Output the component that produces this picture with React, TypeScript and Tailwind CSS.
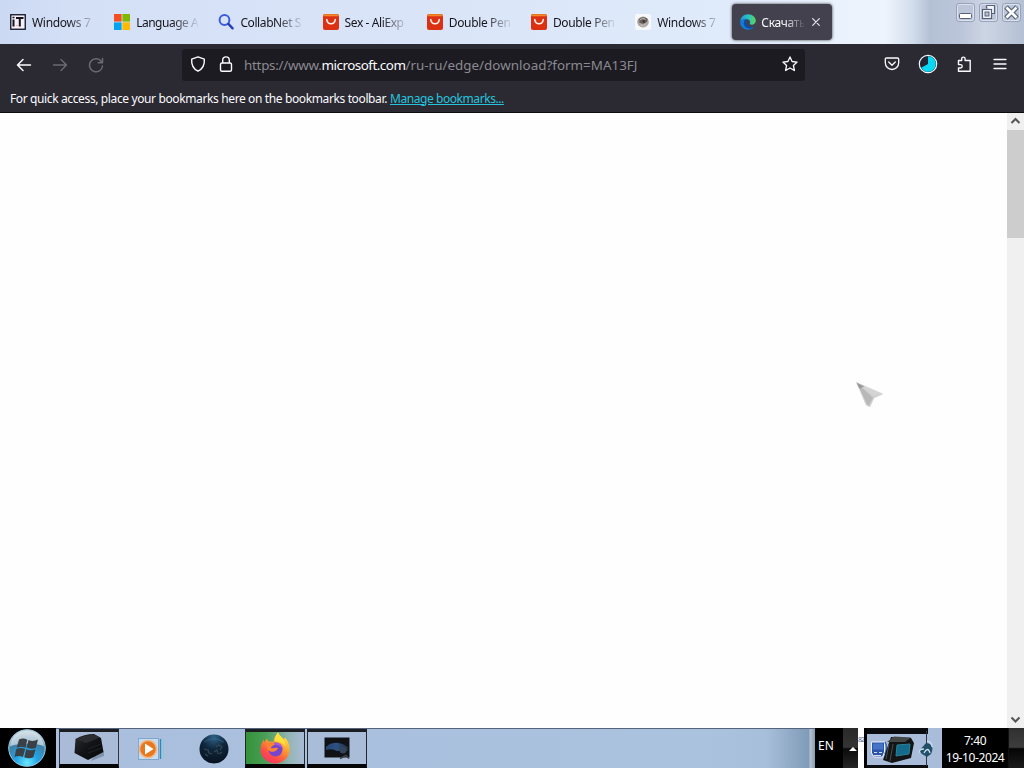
import React from 'react';

type Tab = { title: string; icon: React.ReactNode; tracking: string };

// ── Favicons ─────────────────────────────────────────────────────────────────
const ItIcon = () => (
  <svg viewBox="0 0 16 16" className="w-4 h-4 shrink-0">
    <rect x="0.75" y="0.75" width="14.5" height="14.5" fill="#f4f0f8" stroke="#111122" strokeWidth="1.3" />
    <path d="M3.5 5.5v7M3.5 2.8v1.5M6 4h7.5M9.8 4v8.5" stroke="#17131c" strokeWidth="2" fill="none" />
    <path d="M6 11.5h2" stroke="#efb4b4" />
  </svg>
);

const MicrosoftIcon = () => (
  <svg viewBox="0 0 16 16" className="w-4 h-4 shrink-0">
    <path d="M0 0h7.6v7.6H0z" fill="#f25022" />
    <path d="M8.4 0H16v7.6H8.4z" fill="#7fba00" />
    <path d="M0 8.4h7.6V16H0z" fill="#00a4ef" />
    <path d="M8.4 8.4H16V16H8.4z" fill="#ffb900" />
  </svg>
);

const SearchIcon = () => (
  <svg viewBox="0 0 16 16" className="w-4 h-4 shrink-0" fill="none" strokeLinecap="round">
    <circle cx="6.5" cy="6" r="4.9" stroke="#3a5be0" strokeWidth="2" />
    <path d="M10.4 9.9l4.2 4.4" stroke="#2b3fb4" strokeWidth="2.4" />
  </svg>
);

const AliIcon = () => (
  <svg viewBox="0 0 16 16" className="w-4 h-4 shrink-0">
    <rect width="16" height="16" rx="2" fill="#dc3013" />
    <path d="M.2 2Q.2.2 2 .2h12q1.8 0 1.8 1.8v.2H.2z" fill="#ee8a2a" />
    <path d="M3.7 5.4c.7 5.7 7.900 5.700 8.600 0" stroke="#fff0ec" strokeWidth="1.5" fill="none" strokeLinecap="round" />
  </svg>
);

const GearIcon = () => (
  <svg viewBox="0 0 16 16" className="w-4 h-4 shrink-0">
    <rect width="16" height="16" rx="2" fill="#f7f8fa" />
    <ellipse cx="8" cy="8" rx="5.8" ry="5.4" fill="#aca6a2" />
    <path d="M3.5 6c2-3.500 7-3.500 9.300-.5-1 4-5 5.500-8.500 3z" fill="#6b605c" />
    <path d="M4.5 6.500c1.500-2 4-2.500 6-1M5.500 11c2 1 4.500.5 5.500-1.500" stroke="#c8c2bd" fill="none" />
    <circle cx="8.8" cy="7.5" r="1.4" fill="#433a38" />
  </svg>
);

const EdgeIcon = () => (
  <svg viewBox="0 0 16 16" className="w-4 h-4 shrink-0">
    <defs>
      <linearGradient id="edgeTop" x1="0" x2="1">
        <stop offset="0" stopColor="#1b9de0" />
        <stop offset=".55" stopColor="#2bc4bd" />
        <stop offset="1" stopColor="#5fd657" />
      </linearGradient>
    </defs>
    <path d="M.2 7.500C.6 3 4 .2 8 .2c4.600 0 7.800 3.200 7.800 6.600 0 2.400-1.800 3.900-4 3.900-1.800 0-2.500-.7-1.900-1.600.8-1.500-.5-3.800-3-3.800C4 5.300.9 6.300.2 7.500z" fill="url(#edgeTop)" />
    <path d="M.2 7.500C1.500 5 4 4.300 6.300 5.200 4.300 6.200 4 9 5.500 11c1.800 2.500 5 3 8.700 1.800-2 2.500-5 3.400-7.500 2.900C2.800 15-.2 11.600.2 7.500z" fill="#147bd6" />
    <path d="M6.300 5.200c-3 1-3.700 5.300-.3 8.300 2.300 2 5.800 1 8.200-.7-4.600 1.400-8.700-2.200-7.900-7.600z" fill="#0c4ea2" />
  </svg>
);

const tabs: Tab[] = [
  { title: 'Windows 7', icon: <ItIcon />, tracking: 'tracking-[-0.3px]' },
  { title: 'Language A', icon: <MicrosoftIcon />, tracking: 'tracking-[-0.5px]' },
  { title: 'CollabNet S', icon: <SearchIcon />, tracking: 'tracking-[-0.4px]' },
  { title: 'Sex - AliExp', icon: <AliIcon />, tracking: 'tracking-[-0.4px]' },
  { title: 'Double Pen', icon: <AliIcon />, tracking: 'tracking-[-0.35px]' },
  { title: 'Double Pen', icon: <AliIcon />, tracking: 'tracking-[-0.35px]' },
  { title: 'Windows 7', icon: <GearIcon />, tracking: 'tracking-[-0.3px]' },
];

// ── Window buttons ───────────────────────────────────────────────────────────
const WindowButtons = () => (
  <div className="flex gap-1 pt-[3px] pr-[3px]">
    <svg viewBox="0 0 19 19" className="w-[19px] h-[19px]">
      <rect x="0.5" y="0.5" width="18" height="18" rx="2.5" fill="#bcc6d8" stroke="#98a2b8" />
      <rect x="1.5" y="1.5" width="16" height="16" rx="2" fill="none" stroke="#dce3ef" />
      <rect x="3.5" y="10.5" width="12" height="5" rx="1" fill="#fff" stroke="#56617a" />
    </svg>
    <svg viewBox="0 0 19 19" className="w-[19px] h-[19px]">
      <rect x="0.5" y="0.5" width="18" height="18" rx="2.5" fill="#bcc6d8" stroke="#98a2b8" />
      <rect x="1.5" y="1.5" width="16" height="16" rx="2" fill="none" stroke="#dce3ef" />
      <path d="M7.5 2.5h8v8h-3M7.5 2.5v3" fill="#f5f7fb" stroke="#56617a" strokeWidth="1.2" />
      <rect x="3.5" y="6.5" width="9" height="9" fill="#fff" stroke="#56617a" strokeWidth="1.2" />
      <rect x="6" y="9" width="4" height="4" fill="#b9c2d3" stroke="#56617a" />
    </svg>
    <svg viewBox="0 0 19 19" className="w-[19px] h-[19px]">
      <rect x="0.5" y="0.5" width="18" height="18" rx="2.5" fill="#bcc6d8" stroke="#98a2b8" />
      <rect x="1.5" y="1.5" width="16" height="16" rx="2" fill="none" stroke="#dce3ef" />
      <path d="M4 4l11 11M15 4L4 15" stroke="#56617a" strokeWidth="5" />
      <path d="M4.5 4.5l10 10M14.5 4.5l-10 10" stroke="#fff" strokeWidth="2.6" />
    </svg>
  </div>
);

const TabStrip = () => (
  <div className="h-11 flex justify-between bg-[linear-gradient(90deg,#cbd9f3_0px,#d4e0f6_80px,#d9e4f8_400px,#dfeafa_720px,#eaf2fd_840px,#edf4fd_885px,#d3deec_912px,#b4c1d5_930px,#bbc5d9_960px,#ccd5e4_985px,#b4c0d3_1024px)]">
    <div className="flex">
      {tabs.map((tab, i) => (
        <div key={i} className="w-[104.2px] pl-[10px] pr-2 flex items-center gap-[6px]">
          {tab.icon}
          <span className={`flex-1 pt-0.5 whitespace-nowrap text-[12px] text-[#15141a] ${tab.tracking} [mask-image:linear-gradient(90deg,#000_36px,transparent_64px)]`}>
            {tab.title}
          </span>
        </div>
      ))}
      <div className="ml-[3px] mt-1 w-[100px] h-9 rounded-[4px] bg-[#42414d] shadow-[0_0_3px_#333] flex items-center pl-2">
        <EdgeIcon />
        <span className="ml-[5px] w-[44px] pt-0.5 whitespace-nowrap text-[12px] tracking-[-0.35px] text-[#fbfbfe] [mask-image:linear-gradient(90deg,#000_24px,transparent_44px)]">
          Скачать
        </span>
        <svg viewBox="0 0 8 8" className="w-2 h-2 ml-[7px]" stroke="#e6e6ea" strokeWidth="1.2" strokeLinecap="round">
          <path d="M.7.7l6.600 6.600M7.300.7L.7 7.300" />
        </svg>
      </div>
    </div>
    <WindowButtons />
  </div>
);

// ── Navigation bar ───────────────────────────────────────────────────────────
const NavBar = () => (
  <div className="h-[41px] flex items-center text-[#fbfbfe]">
    <svg viewBox="0 0 16 16" className="w-4 h-4 ml-4" fill="none" stroke="currentColor" strokeWidth="1.5" strokeLinecap="round" strokeLinejoin="round">
      <path d="M14.500 8H1.500M7 2.500L1.500 8 7 13.500" />
    </svg>
    <svg viewBox="0 0 16 16" className="w-4 h-4 ml-5 text-[#6b6a70]" fill="none" stroke="currentColor" strokeWidth="1.4" strokeLinecap="round" strokeLinejoin="round">
      <path d="M1.500 8h13M9 2.500L14.500 8 9 13.500" />
    </svg>
    <svg viewBox="0 0 16 16" className="w-4 h-4 ml-5 text-[#6b6a70]" fill="none" stroke="currentColor" strokeWidth="1.5" strokeLinecap="round" strokeLinejoin="round">
      <path d="M13.300 4.500A6.500 6.500 0 1 0 14.500 9M14.500 1.500v4.200h-4.300" />
    </svg>
    <div className="ml-[78px] w-[623px] h-8 bg-[#1c1b22] rounded-[3px] flex items-center">
      <svg viewBox="0 0 16 16" className="w-4 h-4 ml-2 -mt-0.5" fill="none" stroke="currentColor" strokeWidth="1.4" strokeLinejoin="round">
        <path d="M8 .9l6.300 2.300c.5 5.500-1.500 9.500-6.300 12C3.200 12.700 1.200 8.700 1.700 3.200z" />
      </svg>
      <svg viewBox="0 0 16 16" className="w-4 h-4 ml-3 -mt-0.5" fill="none" stroke="currentColor" strokeWidth="1.4">
        <rect x="2.5" y="7" width="11" height="8.2" rx="1.5" />
        <path d="M4.700 7V4.200a3.300 3.300 0 0 1 6.600 0V7" />
      </svg>
      <div className="ml-[10px] flex-1 pt-px whitespace-nowrap text-[13.4px] text-[#8b8a90]">
        <span className="tracking-[-0.27px]">https://www.</span>
        <span className="text-[#fbfbfe] tracking-[-0.5px]">microsoft.com</span>
        <span className="tracking-[0.02px]">/ru-ru/edge/download?form=MA13FJ</span>
      </div>
      <svg viewBox="0 0 16 16" className="w-4 h-4 mr-[7px] -mt-0.5" fill="none" stroke="currentColor" strokeWidth="1.3" strokeLinejoin="round">
        <path d="M8 .9l2.100 4.600 5 .6-3.700 3.400 1 5L8 12l-4.400 2.500 1-5L.9 6.100l5-.6z" />
      </svg>
    </div>
    <svg viewBox="0 0 16 16" className="w-4 h-4 ml-[79px] -mt-0.5" fill="none" stroke="currentColor" strokeWidth="1.3" strokeLinecap="round" strokeLinejoin="round">
      <path d="M2.500 2h11q1.200 0 1.200 1.200v3.600a6.700 6.700 0 0 1-13.400 0V3.200Q1.300 2 2.500 2zM4.700 6L8 9.200 11.300 6" />
    </svg>
    <svg viewBox="0 0 20 20" className="w-5 h-5 ml-[18px] -mt-0.5">
      <circle cx="10" cy="10" r="8.7" fill="#222536" stroke="#eefaff" strokeWidth="1.2" />
      <path d="M10 10V2.200a7.800 7.800 0 1 1-6.800 11.600z" fill="#08d8f4" />
    </svg>
    <svg viewBox="0 0 16 16" className="w-4 h-4 ml-[18px] -mt-0.5" fill="none" stroke="currentColor" strokeWidth="1.4" strokeLinejoin="round">
      <path d="M2.500 4.500h3.200V2.800a1.700 1.700 0 0 1 3.400 0v1.700h5.100v10.700H2.500v-3.200h2a1.700 1.700 0 0 0 0-3.400h-2z" />
    </svg>
    <svg viewBox="0 0 16 16" className="w-4 h-4 ml-5 -mt-0.5" stroke="currentColor" strokeWidth="1.3" strokeLinecap="round">
      <path d="M2 3.500h12M2 8h12M2 12.500h12" />
    </svg>
  </div>
);

const Scrollbar = () => (
  <div className="w-[17px] bg-[#f0f0f0] flex flex-col items-center">
    <svg viewBox="0 0 17 17" className="w-[17px] h-[17px]" fill="none" stroke="#555" strokeWidth="2">
      <path d="M4.500 10l4-4 4 4" />
    </svg>
    <div className="w-full h-[108px] bg-[#cdcdcd]" />
    <div className="flex-1" />
    <svg viewBox="0 0 17 17" className="w-[17px] h-[17px]" fill="none" stroke="#555" strokeWidth="2">
      <path d="M4.500 6.500l4 4 4-4" />
    </svg>
  </div>
);

// ── Taskbar ──────────────────────────────────────────────────────────────────
const StartOrb = () => (
  <svg viewBox="0 0 38 38" className="w-[38px] h-[38px]">
    <defs>
      <radialGradient id="orb" cx=".5" cy=".9" r=".85">
        <stop offset="0" stopColor="#6be8ff" />
        <stop offset=".35" stopColor="#22a4e6" />
        <stop offset=".7" stopColor="#3f7fa6" />
        <stop offset="1" stopColor="#c4d4de" />
      </radialGradient>
    </defs>
    <circle cx="19" cy="19" r="18.3" fill="url(#orb)" stroke="#9ccbe4" />
    <path d="M2 17C4 5 12 2 19 2s15 3 17 15c-9-3-23-3-34 0z" fill="#dbe4ea" opacity=".7" />
    <path d="M11 10.500c3-1.500 5.500-1.300 8.300.2l-1.900 8c-3-1.200-5.400-1.300-8.700 0zM20.500 11c3 1.300 6 1.200 9.500-.4l-2.100 8.200c-3 1.300-6 1.100-9.300-.2zM8.300 20c3-1.300 5.600-1.200 8.800 0L15 28c-3-1.300-5.500-1.200-8.500 0zM18.300 20.200c3 1.300 6 1.200 9.200 0l-2.100 8c-3 1.500-6 1.400-9.200 0z" fill="#3a4046" />
  </svg>
);

const BoxIcon = () => (
  <svg viewBox="0 0 32 30" className="w-8 h-[30px]">
    <defs>
      <linearGradient id="box" x1="0" y1="0" x2="1" y2="1">
        <stop offset="0" stopColor="#2a2c30" />
        <stop offset=".5" stopColor="#121316" />
        <stop offset="1" stopColor="#060708" />
      </linearGradient>
    </defs>
    <path d="M18 28l13-5v-4l-6-2z" fill="#71809a" opacity=".7" />
    <path d="M2.500 6Q11 1 21 1l7 4 2.500 14L15 27 1.500 20z" fill="url(#box)" />
    <path d="M3 6Q12 2 21 1.500l6 3-14 5.500z" fill="#2b2d31" />
    <path d="M15 16l13-5M15 20l14-5" stroke="#1f2125" fill="none" />
  </svg>
);

const MediaPlayerIcon = () => (
  <svg viewBox="0 0 28 24" className="w-7 h-6">
    <rect x="1.5" y="1.5" width="20" height="21" fill="#c8dcf0" stroke="#7fa7cb" />
    <path d="M23.500 2v20" stroke="#2889b4" strokeWidth="1.3" />
    <path d="M26.500 2v20" stroke="#8bc9d8" />
    <circle cx="11" cy="12" r="8.5" fill="#e87820" stroke="#f4b783" strokeWidth="1.5" />
    <path d="M8 6.500l8.500 5.500L8 17.500z" fill="#fff" />
  </svg>
);

const GlobeIcon = () => (
  <svg viewBox="0 0 30 30" className="w-[30px] h-[30px]">
    <defs>
      <radialGradient id="globe" cx=".5" cy=".1" r=".9">
        <stop offset="0" stopColor="#2f6288" />
        <stop offset=".45" stopColor="#10273d" />
        <stop offset="1" stopColor="#07121f" />
      </radialGradient>
    </defs>
    <circle cx="15" cy="15" r="14.5" fill="url(#globe)" />
    <path d="M5 15l4 1 1 3 3 1M17 13l3-2 3 2-2 3M20 20l3-2M9 22l-3-2M15 18l3-2 1 4" stroke="#35474f" strokeWidth="1.2" fill="none" />
    <path d="M5 8Q14 2 25 8" stroke="#3f7797" strokeWidth="1.5" fill="none" opacity=".35" />
  </svg>
);

const FirefoxIcon = () => (
  <svg viewBox="0 0 32 32" className="w-8 h-8 shrink-0">
    <defs>
      <linearGradient id="fox" x1=".8" y1="0" x2=".2" y2="1">
        <stop offset="0" stopColor="#fff44a" />
        <stop offset=".4" stopColor="#ff9a2e" />
        <stop offset=".75" stopColor="#ff4a4a" />
        <stop offset="1" stopColor="#f0366c" />
      </linearGradient>
    </defs>
    <path d="M19 .5c1 3 4 4.500 6 7l1-2c3 3.500 5 8 4.500 13C30 26 23.500 31.500 16 31.500S1.500 25.500 1.500 17.500c0-4 1.500-7.500 3.500-10v3l3-4 1.500 3c2 0 3-.5 5 .5C14.500 6 17 3 19 .5z" fill="url(#fox)" />
    <path d="M19 .5c1 3 4 4.500 6 8l2 7c-2-4-6-6-11-6-1-3 1-6 3-9z" fill="#ffe13a" />
    <circle cx="16.5" cy="17.5" r="7" fill="#7545cf" />
    <path d="M7 12c3-2 7-2 9 0-1 2-4 2-4 4 2 1 5-1 7 0-1 4-7 5-10 2z" fill="#ff8430" />
    <path d="M15 11c4-1 8 1 8.500 5-2-1-4-3-7-3z" fill="#a558dc" />
  </svg>
);

const MonitorIcon = () => (
  <svg viewBox="0 0 28 26" className="w-7 h-[26px]">
    <defs>
      <linearGradient id="monitor" x1="0" x2="1">
        <stop offset="0" stopColor="#27466f" />
        <stop offset=".5" stopColor="#2d5185" />
        <stop offset="1" stopColor="#232c38" />
      </linearGradient>
    </defs>
    <path d="M1.500 2.500h25v20h-25z" fill="#101216" />
    <path d="M3 12q5-5 13-4 5 1 9 4v4H14q-5-3-11-1z" fill="url(#monitor)" />
    <circle cx="20" cy="15" r="3.5" fill="#34445a" />
    <path d="M17 23.500l6-3 3 3" stroke="#3b4148" strokeWidth="1.5" fill="none" />
  </svg>
);

const TrayIcons = () => (
  <svg viewBox="0 0 75 40" className="w-[75px] h-10">
    <path d="M0 0h61v6H0zM0 37h61v3H0z" fill="#0b0c10" />
    <path d="M59.500 3v35" stroke="#303744" />
    <path d="M4.500 14h13v10l-2 5H7l-2.500-4z" fill="#2c55a8" stroke="#eef4ff" />
    <path d="M6 15.500h10v6H6z" fill="#4674c6" />
    <path d="M7 24.500h3M12 24.500h3M7 27.500h7" stroke="#d5e2f6" />
    <path d="M18 14q3 5 0 12" stroke="#3866b6" strokeWidth="1.5" fill="none" />
    <path d="M24 9l20 1 3 5-3 15-19 5-9-3z" fill="#121416" />
    <path d="M20 14l7-5.500 17 1-6 4.500z" fill="#454747" />
    <path d="M30 17l13-1-1 10-13 2z" fill="#126b8a" stroke="#2b7f96" />
    <path d="M22 16l-3 15M26 16l-3 17" stroke="#4a4c4d" />
    <path d="M52 23l7-8c6 0 8 5 5 11l-4 3-5-3z" fill="#214e68" />
    <path d="M53 25q-2-4 4-4M57 25q4-7 6 0M60 13q5 1 5 6" stroke="#c9deeb" strokeWidth="1.3" fill="none" />
  </svg>
);

const Taskbar = () => (
  <div className="h-10 flex bg-black text-white">
    <div className="w-14 pl-2 flex items-center"><StartOrb /></div>
    <div className="w-[759px] flex border-t border-[#53647c] bg-[linear-gradient(90deg,#a9bfdd_0px,#abc2df_650px,#a8bfdb_710px,#7f9bb7_753px,#b5c4d4_754px,#899bae_759px)]">
      <div className="ml-[3px] w-[60px] flex items-center justify-center border-x border-t-[3px] border-b-4 border-x-[#30343a] border-t-[#1c1d21] border-b-[#050506] bg-[#a9bbd6]"><BoxIcon /></div>
      <div className="w-16 flex items-center justify-center"><MediaPlayerIcon /></div>
      <div className="w-[62px] flex items-center justify-center"><GlobeIcon /></div>
      <div className="w-[60px] flex items-center justify-center border-x border-t-[3px] border-b-4 border-x-[#22252a] border-t-[#1c1d21] border-b-[#050506] bg-[linear-gradient(90deg,#349238_0%,#4a9f57_35%,#95b5b6_75%,#a8bcd6_100%)]"><FirefoxIcon /></div>
      <div className="ml-[2px] w-[60px] flex items-center justify-center border-x border-t-[3px] border-b-4 border-x-[#22252a] border-t-[#1c1d21] border-b-[#050506] bg-[#a9bdd9]"><MonitorIcon /></div>
    </div>
    <div className="w-7 pl-[3px] pt-[9px] text-[12px] leading-[17px]">EN</div>
    <div className="w-[15px] flex items-end justify-center bg-[linear-gradient(#292929_0%,#343434_48%,#0b0b0b_52%,#252525_100%)]">
      <svg viewBox="0 0 8 6" className="w-2 h-[6px] mb-4 ml-[5px]" fill="#fff"><path d="M4 1l4 4H0z" /></svg>
    </div>
    <div className="w-[6px] bg-white text-[7px] leading-3 pt-[6px] tracking-[-1px] whitespace-nowrap text-[#426894]">82</div>
    <div className="w-[78px] flex items-center bg-[#a9bddb] border-l-[3px] border-l-black">
      <TrayIcons />
    </div>
    <div className="w-[66px] text-center text-[12px] leading-[17px] pt-1 tracking-[-0.4px] whitespace-nowrap">
      <div>7:40</div>
      <div>19-10-2024</div>
    </div>
    <div className="flex-1 border-l border-[#111] bg-[linear-gradient(#303030_0%,#3d3d3d_48%,#050505_52%,#1b1b1b_100%)]" />
  </div>
);

export default function App() {
  return (
    <div className="relative w-[1024px] h-[768px] overflow-hidden flex flex-col bg-white font-['Noto_Sans','Open_Sans',sans-serif]">
      <TabStrip />
      <div className="h-[69px] bg-[#2b2a33] border-b border-[#0c0c0d]">
        <NavBar />
        <div className="h-[27px] pl-[10px] flex items-center whitespace-nowrap text-[12px] tracking-[-0.375px] text-[#fbfbfe]">
          For quick access, place your bookmarks here on the bookmarks toolbar.
          <span className="ml-[3px] tracking-[-0.43px] text-[#25c4dd] underline">Manage bookmarks...</span>
        </div>
      </div>
      <div className="flex-1 flex">
        <div className="flex-1 bg-[#fefefe]" />
        <Scrollbar />
      </div>
      <Taskbar />

      {/* Mouse cursor */}
      <svg viewBox="0 0 28 27" className="absolute left-[856px] top-[382px] w-7 h-[27px]">
        <path d="M.5.5L27 12l-9 4-4 9-4-2z" fill="#cbcbcb" stroke="#dedede" strokeWidth=".6" />
        <path d="M.5.5L17 16l-5 8z" fill="#b8b8b8" />
        <path d="M.5.5L25 12l-8 2z" fill="#d4d4d4" />
        <path d="M.5.5l8 4-5 2z" fill="#888" opacity=".7" />
      </svg>
    </div>
  );
}
